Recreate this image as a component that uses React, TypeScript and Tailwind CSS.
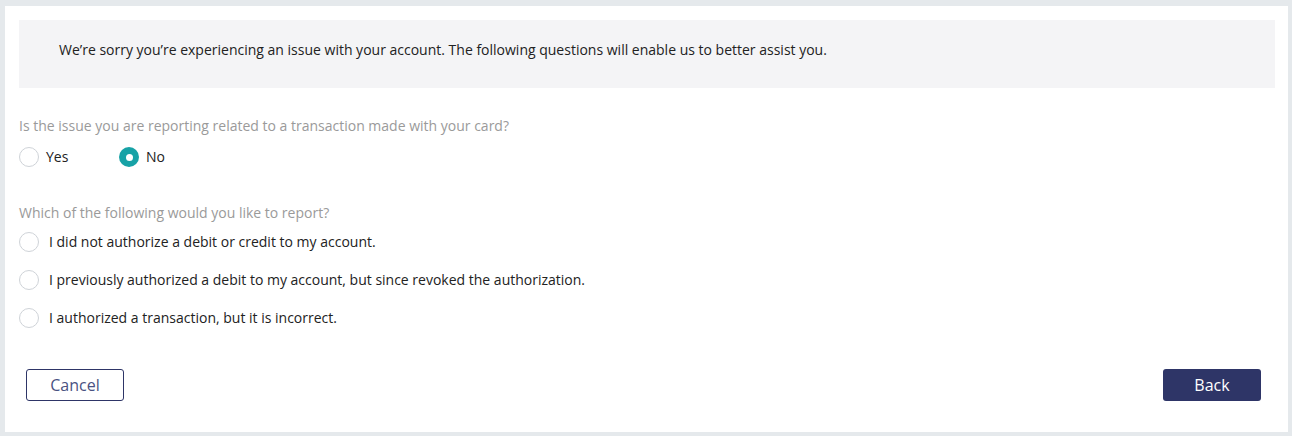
import React from "react";

function Radio({ checked }: { checked?: boolean }) {
  return checked ? (
    <span className="flex h-[20px] w-[20px] shrink-0 items-center justify-center rounded-full bg-[#17a2a6]">
      <span className="h-[7px] w-[7px] rounded-full bg-white" />
    </span>
  ) : (
    <span className="h-[20px] w-[20px] shrink-0 rounded-full border border-[#cfd3d8] bg-white" />
  );
}

export default function App() {
  const font = { fontFamily: '"Open Sans", "Noto Sans", sans-serif' };
  return (
    <div className="h-[436px] w-[1292px] bg-[#e5e9ec] pl-[5px] pt-[6px]" style={font}>
      <div className="flex h-[426px] w-[1283px] flex-col bg-white px-[14px] pt-[14px]">
        <div className="h-[68px] w-[1256px] bg-[#f4f4f6] pl-[40px] pt-[20px] text-[14px] leading-[20px] text-[#222]">
          We’re sorry you’re experiencing an issue with your account. The following questions will enable us to better assist you.
        </div>
        <div className="mt-[28px] text-[14px] leading-[20px] text-[#9a9a9a]">
          Is the issue you are reporting related to a transaction made with your card?
        </div>
        <div className="mt-[11px] flex h-[20px] items-center text-[14px] leading-[20px] text-[#222]">
          <label className="flex w-[100px] items-center gap-[7px]">
            <Radio />
            <span>Yes</span>
          </label>
          <label className="flex items-center gap-[7px]">
            <Radio checked />
            <span>No</span>
          </label>
        </div>
        <div className="mt-[36px] text-[14px] leading-[20px] text-[#9a9a9a]">
          Which of the following would you like to report?
        </div>
        <div className="mt-[9px] flex flex-col gap-[18px] text-[14px] leading-[20px] text-[#222]">
          {[
            "I did not authorize a debit or credit to my account.",
            "I previously authorized a debit to my account, but since revoked the authorization.",
            "I authorized a transaction, but it is incorrect.",
          ].map((t) => (
            <label key={t} className="flex h-[20px] items-center gap-[10px]">
              <Radio />
              <span>{t}</span>
            </label>
          ))}
        </div>
        <div className="mt-[41px] flex justify-between px-[7px]">
          <button className="h-[32px] w-[98px] rounded-[3px] border border-[#2e3567] bg-white text-[16px] text-[#4a5282]">
            Cancel
          </button>
          <button className="mr-[6px] h-[32px] w-[98px] rounded-[3px] bg-[#2e3567] text-[16px] text-white">
            Back
          </button>
        </div>
      </div>
    </div>
  );
}
